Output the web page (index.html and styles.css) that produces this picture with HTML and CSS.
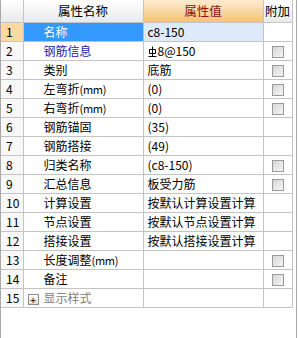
FILE: index.html
```html
<!DOCTYPE html>
<html>
<head>
<meta charset="utf-8">
<link rel="stylesheet" href="styles.css">
</head>
<body>
<div class="frame">
<table class="grid">
<colgroup><col class="c-num"><col class="c-name"><col class="c-val"><col class="c-add"></colgroup>
<thead>
<tr><th class="h-num"></th><th class="h-name">属性名称</th><th class="h-val">属性值</th><th class="h-add">附加</th></tr>
</thead>
<tbody>
<tr class="sel"><td class="num">1</td><td class="name">名称</td><td class="val">c8-150</td><td class="add"></td></tr>
<tr><td class="num">2</td><td class="name blue">钢筋信息</td><td class="val"><svg class="rebar" width="9" height="11" viewBox="0 0 9 11"><path d="M4.5 0.5V10.5M1.5 3.5H7.5V7.5H1.5Z M0.5 10.5H8.5" fill="none" stroke="#000" stroke-width="1"/></svg>8@150</td><td class="add"><span class="chk"></span></td></tr>
<tr><td class="num">3</td><td class="name">类别</td><td class="val">底筋</td><td class="add"><span class="chk"></span></td></tr>
<tr><td class="num">4</td><td class="name">左弯折<span class="mm">(mm)</span></td><td class="val">(0)</td><td class="add"><span class="chk"></span></td></tr>
<tr><td class="num">5</td><td class="name">右弯折<span class="mm">(mm)</span></td><td class="val">(0)</td><td class="add"><span class="chk"></span></td></tr>
<tr><td class="num">6</td><td class="name">钢筋锚固</td><td class="val">(35)</td><td class="add"></td></tr>
<tr><td class="num">7</td><td class="name">钢筋搭接</td><td class="val">(49)</td><td class="add"></td></tr>
<tr><td class="num">8</td><td class="name">归类名称</td><td class="val">(c8-150)</td><td class="add"><span class="chk"></span></td></tr>
<tr><td class="num">9</td><td class="name">汇总信息</td><td class="val">板受力筋</td><td class="add"><span class="chk"></span></td></tr>
<tr><td class="num">10</td><td class="name">计算设置</td><td class="val">按默认计算设置计算</td><td class="add"></td></tr>
<tr><td class="num">11</td><td class="name">节点设置</td><td class="val">按默认节点设置计算</td><td class="add"></td></tr>
<tr><td class="num">12</td><td class="name">搭接设置</td><td class="val">按默认搭接设置计算</td><td class="add"></td></tr>
<tr><td class="num">13</td><td class="name">长度调整<span class="mm">(mm)</span></td><td class="val"></td><td class="add"><span class="chk"></span></td></tr>
<tr><td class="num">14</td><td class="name">备注</td><td class="val"></td><td class="add"><span class="chk"></span></td></tr>
<tr><td class="num">15</td><td class="name group"><span class="plus">+</span>显示样式</td><td class="val"></td><td class="add"></td></tr>
</tbody>
</table>
</div>
</body>
</html>
```
FILE: styles.css
```css
html, body {
  margin: 0;
  padding: 0;
  background: #ffffff;
}
.frame {
  width: 297px;
  height: 338px;
  border-left: 1px solid #a8a8a8;
  border-right: 1px solid #a8a8a8;
  box-sizing: border-box;
  font-family: "Noto Sans CJK SC", "Noto Sans", sans-serif;
  font-size: 12px;
  color: #000;
}
.grid {
  border-collapse: collapse;
  table-layout: fixed;
  width: 291px;
}
.c-num { width: 22px; }
.c-name { width: 120px; }
.c-val { width: 120px; }
.c-add { width: 29px; }
th, td {
  border-right: 1px solid #c4c4c4;
  border-bottom: 1px solid #c4c4c4;
  padding: 0;
  white-space: nowrap;
  overflow: hidden;
  line-height: 18px;
}
thead th {
  height: 22px;
  font-weight: normal;
  text-align: center;
  background: linear-gradient(#ffffff, #e9e9e9);
  color: #000;
  line-height: 22px;
  font-size: 12.5px;
}
thead th.h-val {
  background: linear-gradient(#fdebcf, #f4c27a);
  color: #8b1010;
}
tbody td { height: 18px; }
td.num {
  padding-left: 5px;
  background: #f8f8f8;
}
td.name { padding-left: 20px; }
td.val { padding-left: 4px; }
td.add { text-align: center; }
.mm { font-size: 11px; letter-spacing: -0.3px; }
.rebar { vertical-align: -1px; margin-right: 1px; }
.blue { color: #1c1ca8; }
.group { padding-left: 4px !important; color: #808080; }
.plus {
  display: inline-block;
  width: 9px;
  height: 9px;
  border: 1px solid #8c8c8c;
  background: linear-gradient(#ffffff, #dcdcdc);
  color: #000;
  font-size: 10px;
  line-height: 9px;
  text-align: center;
  margin-right: 5px;
  vertical-align: -1px;
}
.sel td.num { background: #fcd9a3; }
.sel td.name { background: #3399ff; color: #ffffff; }
.sel td.val { background: #ddeafa; }
.chk {
  display: inline-block;
  width: 10px;
  height: 10px;
  border: 1px solid #9a9a9a;
  background: linear-gradient(135deg, #d6d6d6, #f6f6f6);
  vertical-align: -2px;
}
```
